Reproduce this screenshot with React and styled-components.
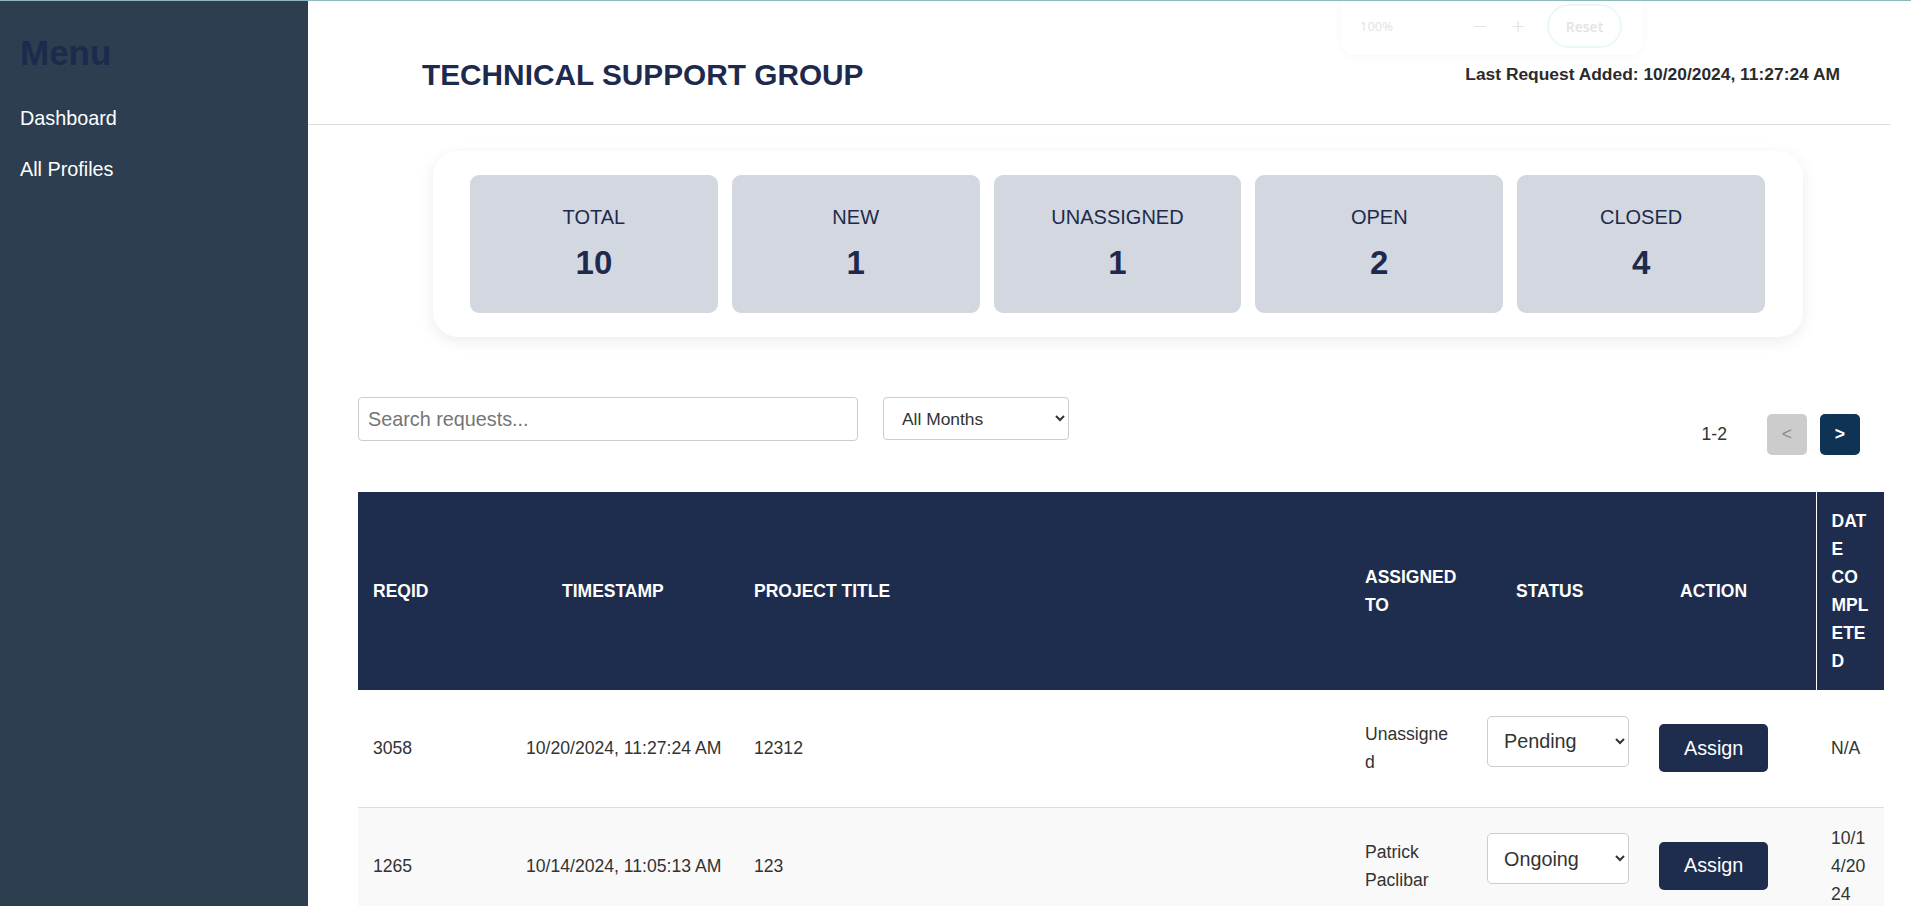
import React from 'react';
import styled, { createGlobalStyle } from 'styled-components';

const NAVY = '#1e2d4e';
const TITLE = '#1e2a4d';

const GlobalStyle = createGlobalStyle`
  html, body { margin: 0; padding: 0; overflow: hidden; }
  body { font-family: "Liberation Sans", Arial, sans-serif; background: #fff; color: #333; }
  * { box-sizing: border-box; }
`;

const Layout = styled.div`
  display: flex;
  height: 100vh;
  border-top: 1px solid #8db9bd;
  overflow: hidden;
`;

const Sidebar = styled.aside`
  width: 308px;
  flex-shrink: 0;
  background: #2c3e50;
  padding: 32px 20px;
`;

const MenuTitle = styled.h2`
  margin: 0;
  font-size: 35px;
  line-height: 40px;
  font-weight: 700;
  color: ${TITLE};
`;

const NavList = styled.ul`
  margin: 20px 0 0;
  padding: 0;
  list-style: none;
`;

const NavItem = styled.li`
  font-size: 19.8px;
  line-height: 25px;
  padding: 13px 0;
  color: #fff;
`;

const Main = styled.main`
  flex: 1;
  min-width: 0;
  position: relative;
  padding-right: 21px;
  overflow: hidden;
`;

const Header = styled.header`
  height: 124px;
  padding: 24px 50px 0 114px;
  display: flex;
  align-items: center;
  justify-content: space-between;
  border-bottom: 1px solid #dddddd;
`;

const Title = styled.h1`
  margin: 0;
  font-size: 29.8px;
  font-weight: 700;
  color: ${TITLE};
`;

const LastAdded = styled.div`
  font-size: 17.4px;
  font-weight: 700;
  color: #2b2b2b;
`;

const StatsPanel = styled.section`
  margin: 26px 87px 0 125px;
  background: #fff;
  border-radius: 25px;
  box-shadow: 0 4px 16px rgba(0, 0, 0, 0.08);
  padding: 24px 38px 24px 37px;
  display: flex;
  gap: 14px;
`;

const StatCard = styled.div`
  flex: 1;
  background: #d3d8e0;
  border-radius: 9px;
  padding: 30px 0 31px;
  text-align: center;
  color: ${TITLE};
`;

const StatLabel = styled.div`
  font-size: 20px;
  line-height: 24px;
`;

const StatValue = styled.div`
  margin-top: 15px;
  font-size: 33px;
  line-height: 38px;
  font-weight: 700;
`;

const Toolbar = styled.div`
  display: flex;
  align-items: flex-start;
  margin: 60px 30px 0 50px;
`;

const SearchInput = styled.input`
  width: 500px;
  height: 44px;
  padding: 0 9px;
  border: 1px solid #cccccc;
  border-radius: 4px;
  font-family: inherit;
  font-size: 19.8px;
  color: #333;
  outline: none;
  &::placeholder { color: #757575; }
`;

const MonthSelect = styled.select`
  margin-left: 25px;
  width: 186px;
  height: 43px;
  padding: 0 14px;
  border: 1px solid #cccccc;
  border-radius: 4px;
  background: #fff;
  font-family: inherit;
  font-size: 17.4px;
  color: #333;
`;

const Pager = styled.div`
  margin-left: auto;
  margin-top: 17px;
  display: flex;
  align-items: center;
  gap: 13px;
`;

const PageInfo = styled.span`
  font-size: 17.6px;
  color: #333;
  margin-right: 27px;
`;

const PageButton = styled.button`
  width: 40px;
  height: 41px;
  border: none;
  border-radius: 5px;
  padding: 0;
  font-family: inherit;
  font-size: 17.6px;
  font-weight: ${(p) => (p.$active ? 700 : 400)};
  background: ${(p) => (p.$active ? '#0f3354' : '#cccccc')};
  color: ${(p) => (p.$active ? '#ffffff' : '#8a8a8a')};
`;

const TableWrap = styled.div`
  margin: 37px 6px 0 50px;
`;

const Table = styled.table`
  width: 100%;
  table-layout: fixed;
  border-collapse: collapse;
`;

const Th = styled.th`
  background: ${NAVY};
  color: #fff;
  font-size: 17.5px;
  font-weight: 700;
  line-height: 28px;
  text-align: left;
  vertical-align: middle;
  padding: 15px 15px 15px ${(p) => p.$indent || 15}px;
  overflow-wrap: anywhere;
  border-left: ${(p) => (p.$divider ? '1px solid #ffffff' : 'none')};
`;

const Row = styled.tr`
  height: 117px;
  background: ${(p) => (p.$alt ? '#f9f9f9' : '#ffffff')};
`;

const Td = styled.td`
  padding: 15px;
  font-size: 17.6px;
  line-height: 28px;
  color: #333;
  vertical-align: middle;
  border-bottom: 1px solid #dddddd;
  overflow-wrap: anywhere;
`;

const StatusSelect = styled.select`
  display: block;
  width: 100%;
  height: 51px;
  margin-bottom: 14px;
  padding: 0 12px;
  border: 1px solid #cccccc;
  border-radius: 5px;
  background: #fff;
  font-family: inherit;
  font-size: 19.8px;
  color: #333;
`;

const AssignButton = styled.button`
  display: block;
  height: 48px;
  padding: 0 25px;
  border: none;
  border-radius: 5px;
  background: ${NAVY};
  color: #fff;
  font-family: inherit;
  font-size: 19.8px;
`;

const ZoomWidget = styled.div`
  position: absolute;
  top: -12px;
  left: 1033px;
  width: 302px;
  height: 66px;
  padding: 8px 0 0 19px;
  display: flex;
  align-items: center;
  background: #fff;
  border-radius: 14px;
  box-shadow: 0 2px 10px rgba(0, 0, 0, 0.035);
  font-family: "Open Sans", sans-serif;
`;

const ZoomLabel = styled.span`
  width: 108px;
  font-size: 13px;
  color: #e2e2e2;
`;

const ZoomStep = styled.span`
  width: 24px;
  margin-left: ${(p) => p.$gap || 0}px;
  text-align: center;
  font-size: 24px;
  line-height: 24px;
  font-weight: 300;
  color: #e3e3e3;
`;

const ResetPill = styled.span`
  margin-left: 17px;
  width: 75px;
  height: 44px;
  display: flex;
  align-items: center;
  justify-content: center;
  border: 2px solid #eaf7fb;
  border-radius: 22px;
  font-size: 14px;
  font-weight: 600;
  color: #e3e3e3;
`;

const stats = [
  { label: 'TOTAL', value: 10 },
  { label: 'NEW', value: 1 },
  { label: 'UNASSIGNED', value: 1 },
  { label: 'OPEN', value: 2 },
  { label: 'CLOSED', value: 4 },
];

const columns = [
  { label: 'REQID', width: 153 },
  { label: 'TIMESTAMP', width: 228, indent: 51 },
  { label: 'PROJECT TITLE', width: 611 },
  { label: 'ASSIGNED TO', width: 122 },
  { label: 'STATUS', width: 172, indent: 44 },
  { label: 'ACTION', width: 172, indent: 36 },
  { label: 'DATE COMPLETED', width: 68, divider: true },
];

const requests = [
  { id: '3058', time: '10/20/2024, 11:27:24 AM', title: '12312', assigned: 'Unassigned', status: 'Pending', done: 'N/A' },
  { id: '1265', time: '10/14/2024, 11:05:13 AM', title: '123', assigned: 'Patrick Paclibar', status: 'Ongoing', done: '10/14/2024' },
];

export default function App() {
  return (
    <>
      <GlobalStyle />
      <Layout>
        <Sidebar>
          <MenuTitle>Menu</MenuTitle>
          <NavList>
            <NavItem>Dashboard</NavItem>
            <NavItem>All Profiles</NavItem>
          </NavList>
        </Sidebar>
        <Main>
          <ZoomWidget>
            <ZoomLabel>100%</ZoomLabel>
            <ZoomStep>−</ZoomStep>
            <ZoomStep $gap={14}>+</ZoomStep>
            <ResetPill>Reset</ResetPill>
          </ZoomWidget>
          <Header>
            <Title>TECHNICAL SUPPORT GROUP</Title>
            <LastAdded>Last Request Added: 10/20/2024, 11:27:24 AM</LastAdded>
          </Header>
          <StatsPanel>
            {stats.map((s) => (
              <StatCard key={s.label}>
                <StatLabel>{s.label}</StatLabel>
                <StatValue>{s.value}</StatValue>
              </StatCard>
            ))}
          </StatsPanel>
          <Toolbar>
            <SearchInput placeholder="Search requests..." />
            <MonthSelect defaultValue="all">
              <option value="all">All Months</option>
            </MonthSelect>
            <Pager>
              <PageInfo>1-2</PageInfo>
              <PageButton>&lt;</PageButton>
              <PageButton $active>&gt;</PageButton>
            </Pager>
          </Toolbar>
          <TableWrap>
            <Table>
              <colgroup>
                {columns.map((c) => (
                  <col key={c.label} style={{ width: c.width }} />
                ))}
              </colgroup>
              <thead>
                <tr>
                  {columns.map((c) => (
                    <Th key={c.label} $indent={c.indent} $divider={c.divider}>
                      {c.label}
                    </Th>
                  ))}
                </tr>
              </thead>
              <tbody>
                {requests.map((r, i) => (
                  <Row key={r.id} $alt={i % 2 === 1}>
                    <Td>{r.id}</Td>
                    <Td>{r.time}</Td>
                    <Td>{r.title}</Td>
                    <Td>{r.assigned}</Td>
                    <Td>
                      <StatusSelect defaultValue={r.status}>
                        <option>Pending</option>
                        <option>Ongoing</option>
                        <option>Completed</option>
                      </StatusSelect>
                    </Td>
                    <Td>
                      <AssignButton>Assign</AssignButton>
                    </Td>
                    <Td>{r.done}</Td>
                  </Row>
                ))}
              </tbody>
            </Table>
          </TableWrap>
        </Main>
      </Layout>
    </>
  );
}
